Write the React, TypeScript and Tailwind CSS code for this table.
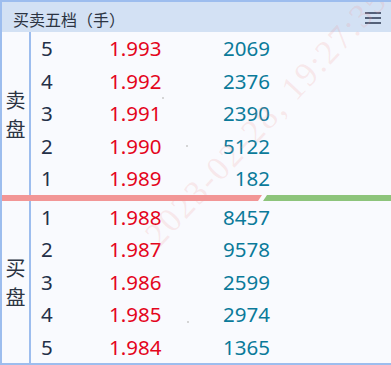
import React from "react";

type Level = { level: number; price: string; volume: number };

const sells: Level[] = [
  { level: 5, price: "1.993", volume: 2069 },
  { level: 4, price: "1.992", volume: 2376 },
  { level: 3, price: "1.991", volume: 2390 },
  { level: 2, price: "1.990", volume: 5122 },
  { level: 1, price: "1.989", volume: 182 },
];

const buys: Level[] = [
  { level: 1, price: "1.988", volume: 8457 },
  { level: 2, price: "1.987", volume: 9578 },
  { level: 3, price: "1.986", volume: 2599 },
  { level: 4, price: "1.985", volume: 2974 },
  { level: 5, price: "1.984", volume: 1365 },
];

const num = "font-['Noto_Sans','Noto_Sans_CJK_SC',sans-serif]";
const cjk = "font-['Noto_Sans_CJK_SC',sans-serif]";

function Side({ label, rows, height }: { label: string[]; rows: Level[]; height: string }) {
  return (
    <div className={`flex ${height}`}>
      {/* side label */}
      <div
        className={`flex w-[29px] flex-col items-center justify-center border-r-2 border-[#9dbdee] text-[20px] leading-[29px] text-[#2c3442] ${cjk}`}
      >
        {label.map((c) => (
          <span key={c}>{c}</span>
        ))}
      </div>
      <div className="flex flex-1 flex-col">
        {rows.map((r) => (
          <div
            key={r.level}
            className={`flex flex-1 items-center text-[20.5px] leading-none ${num}`}
          >
            <span className="w-[78px] pl-[10px] text-[#243048]">{r.level}</span>
            <span className="w-[70px] text-[#e4051c]">{r.price}</span>
            <span className="w-[91px] text-right text-[#0b7a9a]">{r.volume}</span>
          </div>
        ))}
      </div>
    </div>
  );
}

export default function App() {
  return (
    <div className="relative h-[365px] w-[391px] overflow-hidden border-t-2 border-b-2 border-l-2 border-[#9dbdee] bg-[#f9fafe]">
      <div className="flex h-[30px] items-center justify-between bg-[#d3e1f4] pl-[11px] pr-[10px]">
        <span className={`pt-[3px] text-[16px] leading-none text-[#2c3442] ${cjk}`}>
          买卖五档（手）
        </span>
        <svg width="16" height="12" viewBox="0 0 16 12" className="mt-[1px]">
          <g stroke="#34405a" strokeWidth="1.6">
            <line x1="0" y1="1" x2="16" y2="1" />
            <line x1="0" y1="6" x2="16" y2="6" />
            <line x1="0" y1="11" x2="16" y2="11" />
          </g>
        </svg>
      </div>

      <Side label={["卖", "盘"]} rows={sells} height="h-[163px]" />

      <svg width="389" height="6" viewBox="0 0 389 6" className="block">
        <polygon points="0,0 260,0 256,6 0,6" fill="#f29696" />
        <polygon points="265,0 389,0 389,6 261,6" fill="#8dc47b" />
      </svg>

      <Side label={["买", "盘"]} rows={buys} height="h-[162px]" />

      {/* watermark */}
      <div className="pointer-events-none absolute left-[162px] top-[216px] origin-bottom-left rotate-[-47deg] whitespace-nowrap font-['Liberation_Serif',serif] text-[34px] leading-none tracking-[2px] text-[#ef9a9a]/20">
        2023-02-28, 19:27:35
      </div>

      <span className="absolute left-[160px] top-[95px] h-[2px] w-[2px] rounded-full bg-[#c8c8c8]" />
      <span className="absolute left-[184px] top-[143px] h-[2px] w-[2px] rounded-full bg-[#c8c8c8]" />
      <span className="absolute left-[185px] top-[319px] h-[2px] w-[2px] rounded-full bg-[#c8c8c8]" />
    </div>
  );
}
